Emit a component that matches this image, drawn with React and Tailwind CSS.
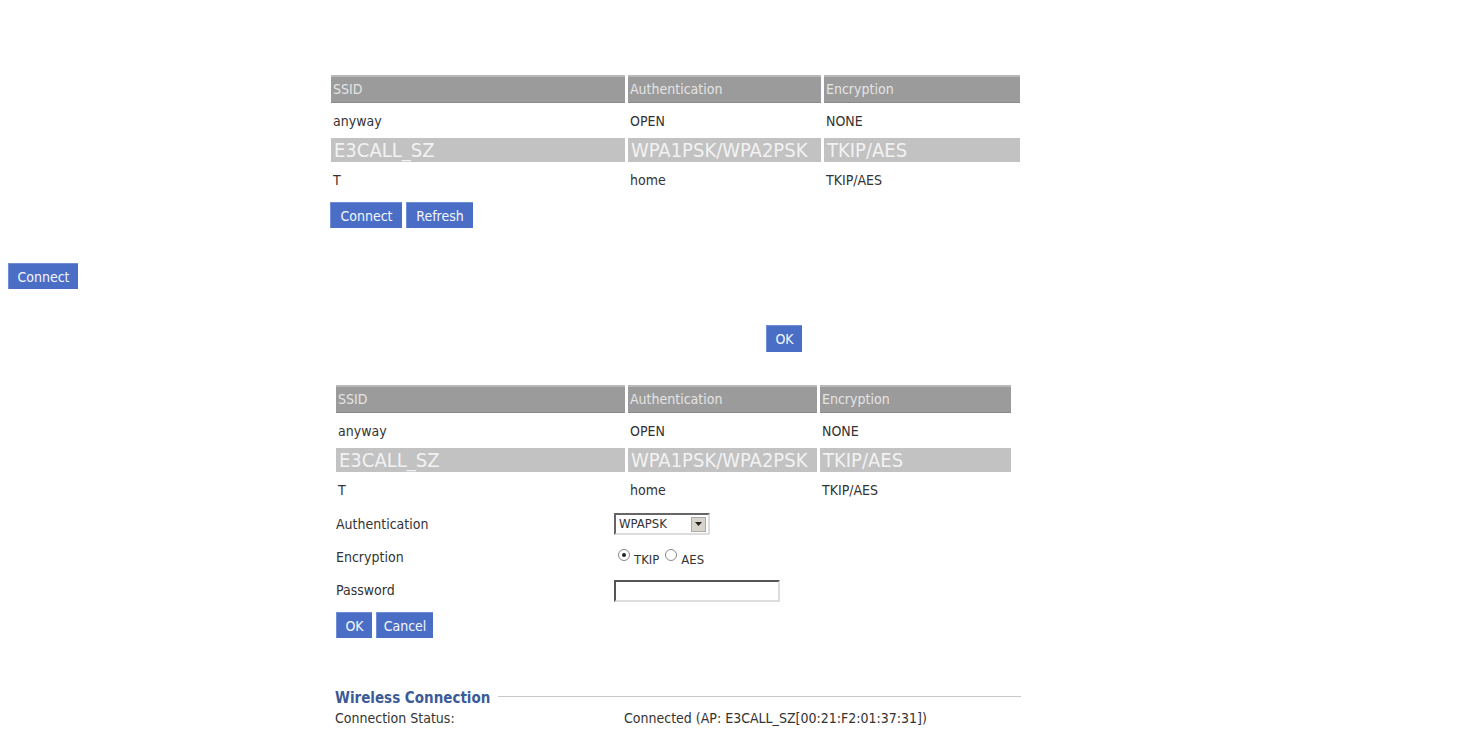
import React from "react";

const rows = [
  { ssid: "anyway", auth: "OPEN", enc: "NONE" },
  { ssid: "E3CALL_SZ", auth: "WPA1PSK/WPA2PSK", enc: "TKIP/AES", selected: true },
  { ssid: "T", auth: "home", enc: "TKIP/AES" },
];

const Btn = ({ children, className = "" }) => (
  <button className={"h-[26px] px-[6px] bg-[#4a6ec6] text-[#f4f6fc] text-[14px] leading-none border-t border-l border-[#6f8ed6] " + className}>
    {children}
  </button>
);

const ApTable = ({ cols, className = "" }) => (
  <div className={"grid gap-x-[3px] " + cols + " " + className}>
    {["SSID", "Authentication", "Encryption"].map((h) => (
      <div key={h} className="h-[28px] flex items-center px-[2px] bg-[#9b9b9b] text-[#e4e4e4] text-[14px] border-t-2 border-[#b8b8b8] border-b border-b-[#8a8a8a]">
        {h}
      </div>
    ))}
    {rows.map((r) =>
      [r.ssid, r.auth, r.enc].map((v, i) =>
        r.selected ? (
          <div key={r.ssid + i} className="h-[24px] flex items-center px-[3px] bg-[#c2c2c2] text-[#f2f2f2] text-[20px] whitespace-nowrap">
            {v}
          </div>
        ) : (
          <div key={r.ssid + i} className="h-[35px] flex items-center px-[2px] pt-[1px] text-[#333] text-[14px]">
            {v}
          </div>
        )
      )
    )}
  </div>
);

export default function App() {
  return (
    <div className="min-h-[742px] bg-white pt-[75px] text-[#333]" style={{ fontFamily: '"DejaVu Sans Condensed", "Liberation Sans Narrow", sans-serif' }}>
      <div className="ml-[331px]">
        <ApTable cols="grid-cols-[294px_193px_196px]" />
        <div className="flex gap-[4px] mt-[5px] -ml-[1px]">
          <Btn className="w-[72px]">Connect</Btn>
          <Btn className="w-[67px]">Refresh</Btn>
        </div>
      </div>

      <div className="ml-[8px] mt-[35px]">
        <Btn className="h-[22px] w-[70px]">Connect</Btn>
      </div>

      <div className="ml-[766px] mt-[36px]">
        <Btn className="h-[27px] w-[36px] px-0">OK</Btn>
      </div>

      <div className="ml-[336px] mt-[33px]">
        <ApTable cols="grid-cols-[289px_189px_191px]" />
        <div className="grid grid-cols-[278px_1fr] text-[14px]">
          <div className="h-[34px] flex items-center">Authentication</div>
          <div className="h-[34px] flex items-center">
            <div className="w-[96px] h-[22px] flex items-center justify-between border-2 border-t-[#666] border-l-[#666] border-b-[#ddd] border-r-[#ddd] bg-white pl-[3px] pr-[2px] text-[13px]">
              <span>WPAPSK</span>
              <span className="w-[15px] h-[15px] bg-[#d8d4cc] border border-[#aaa] flex items-center justify-center">
                <svg width="7" height="4" viewBox="0 0 7 4"><path d="M0 0h7L3.5 4z" fill="#222" /></svg>
              </span>
            </div>
          </div>
          <div className="h-[33px] flex items-center">Encryption</div>
          <div className="h-[33px] flex items-center gap-[4px] text-[13px]">
            <span className="w-[12px] h-[12px] rounded-full border border-[#888] flex items-center justify-center mt-[-6px] ml-[4px]">
              <span className="w-[4px] h-[4px] rounded-full bg-[#222]" />
            </span>
            <span className="mt-[4px]">TKIP</span>
            <span className="w-[12px] h-[12px] rounded-full border border-[#888] mt-[-6px] ml-[2px]" />
            <span className="mt-[4px]">AES</span>
          </div>
          <div className="h-[33px] flex items-center">Password</div>
          <div className="h-[33px] flex items-center">
            <div className="w-[166px] h-[22px] border-2 border-t-[#555] border-l-[#555] border-b-[#ddd] border-r-[#ddd] bg-white" />
          </div>
        </div>
        <div className="flex gap-[4px] mt-[5px]">
          <Btn className="w-[36px] px-0">OK</Btn>
          <Btn className="w-[57px]">Cancel</Btn>
        </div>
      </div>

      <div className="ml-[335px] mt-[49px] w-[686px]">
        <div className="flex items-center gap-[8px]">
          <span className="text-[#3b5a98] font-bold text-[15px]">Wireless Connection</span>
          <span className="flex-1 h-px bg-[#c8c8c8] mt-[-4px]" />
        </div>
        <div className="grid grid-cols-[289px_1fr] text-[14px] -mt-[2px]">
          <span>Connection Status:</span>
          <span>Connected (AP: E3CALL_SZ[00:21:F2:01:37:31])</span>
        </div>
      </div>
    </div>
  );
}
